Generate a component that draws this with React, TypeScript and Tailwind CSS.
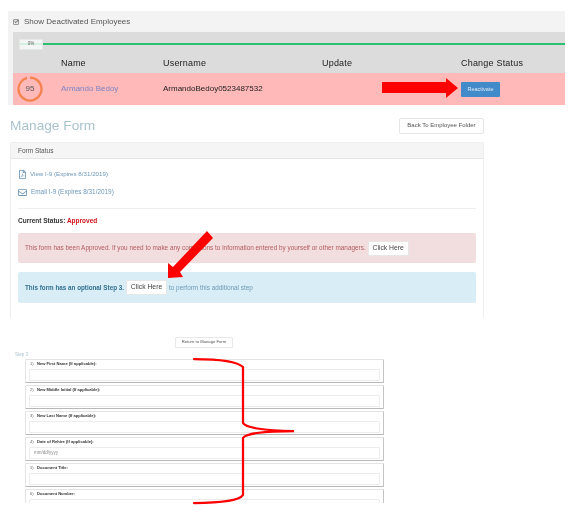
import { Check } from 'lucide-react';
import { FaRegEnvelope, FaRegFilePdf } from 'react-icons/fa';

const fields = [
  { label: 'New First Name (If applicable):' },
  { label: 'New Middle Initial (If applicable):' },
  { label: 'New Last Name (If applicable):' },
  { label: 'Date of Rehire (If applicable):', placeholder: 'mm/dd/yyyy' },
  { label: 'Document Title:' },
  { label: 'Document Number:' },
];

function ScoreRing() {
  return (
    <div className="relative ml-[4px] w-[26px] h-[26px] flex items-center justify-center text-[8px] text-[#555]">
      <svg className="absolute inset-0" width={26} height={26} viewBox="0 0 26 26">
        <circle cx={13} cy={13} r={11.5} fill="none" stroke="#f5834f" strokeWidth={2.25} strokeDasharray="68.6 3.6" transform="rotate(-90 13 13)" />
      </svg>
      <span>95</span>
    </div>
  );
}

function EmployeeTable() {
  return (
    <div className="ml-2 w-[557px] h-[94px] bg-[#f3f3f3] overflow-hidden">
      <div className="h-[21px] pl-[5px] flex items-center gap-[5px] text-[#555]">
        <span className="w-[6px] h-[6px] bg-[#e8e8e8] border border-[#999] rounded-[1px] flex items-center justify-center">
          <Check size={5} strokeWidth={4} className="text-[#333] shrink-0" />
        </span>
        <span className="text-[8px] leading-none">Show Deactivated Employees</span>
      </div>
      <div className="ml-[5px] bg-[#dcdcdc]">
        <div className="h-[41px]">
          <div className="h-[24px] flex items-center pl-[6px]">
            <div className="relative w-[24px] h-[11px] bg-[#f4f6f5] border border-[#e4e8e6] text-[4.5px] text-[#666] flex items-center justify-center">
              <span className="absolute inset-x-0 top-[3px] h-[2px] bg-[#d5efe0]" />
              <span className="relative">0%</span>
            </div>
            <div className="flex-1 h-[2px] bg-[#2fbf71]" />
          </div>
          <div className="flex text-[9px] text-[#222] leading-[14px] tracking-[0.2px]">
            <span className="ml-[48px] w-[102px]">Name</span>
            <span className="w-[159px]">Username</span>
            <span className="w-[139px]">Update</span>
            <span>Change Status</span>
          </div>
        </div>
        <div className="h-[32px] bg-[#ffb9b9] flex items-center">
          <ScoreRing />
          <a className="ml-[18px] w-[102px] text-[8px] text-[#7d84c4]">Armando Bedoy</a>
          <span className="w-[298px] text-[8px] text-[#222]">ArmandoBedoy0523487532</span>
          <button className="w-[39px] h-[15px] bg-[#428bca] rounded-[1px] text-[5.5px] text-[#dfe9f3]">Reactivate</button>
        </div>
      </div>
    </div>
  );
}

function FormStatus() {
  return (
    <div className="ml-[10px] w-[474px] h-[176px] border-l border-r border-t border-[#eeeeee] rounded-t-[2px] overflow-hidden">
      <div className="h-[16px] bg-[#f5f5f5] border-b border-[#e6e6e6] pl-[7px] flex items-center text-[6.5px] text-[#555]">Form Status</div>
      <div className="px-[7px]">
        <div className="h-[18px] mt-[6px] flex items-center gap-[3px] text-[6.2px] text-[#6d97b8]">
          <FaRegFilePdf size={9} />
          <span>View I-9 (Expires 8/31/2019)</span>
        </div>
        <div className="h-[18px] flex items-center gap-[4px] text-[6.4px] text-[#6d97b8]">
          <FaRegEnvelope size={9} />
          <span>Email I-9 (Expires 8/31/2019)</span>
        </div>
        <div className="mt-[7px] border-t border-[#eeeeee] h-[25px] flex items-center text-[6.5px] font-bold text-[#333]">
          <span>Current Status: <span className="text-[#d0111b]">Approved</span></span>
        </div>
        <div className="h-[30px] bg-[#f2dede] rounded-[2px] pl-[7px] flex items-center gap-[2px] text-[6.4px] text-[#b35a5f]">
          <span>This form has been Approved. If you need to make any corrections to information entered by yourself or other managers.</span>
          <button className="w-[41px] h-[15px] bg-white border border-[#e6e6e6] rounded-[1px] text-[6.8px] text-[#444]">Click Here</button>
        </div>
        <div className="mt-[9px] h-[31px] bg-[#d9edf7] rounded-[2px] pl-[7px] flex items-center text-[6.4px] text-[#6c9ab5]">
          <span className="font-bold text-[6.3px] text-[#31708f]">This form has an optional Step 3.</span>
          <button className="mx-[2px] w-[41px] h-[15px] bg-white border border-[#e6e6e6] rounded-[1px] text-[6.8px] text-[#444]">Click Here</button>
          <span>to perform this additional step</span>
        </div>
      </div>
    </div>
  );
}

function StepForm() {
  return (
    <div className="mt-[19px] h-[166px] overflow-hidden">
      <button className="block ml-[175px] w-[58px] h-[11px] bg-white border border-[#e8e8e8] rounded-[1px] text-[4.2px] text-[#555]">Return to Manage Form</button>
      <div className="ml-[15px] mt-[3px] h-[8px] leading-[8px] text-[4.5px] text-[#a9c3cc]">Step 3</div>
      <div className="ml-[25px] w-[359px] h-[144px] overflow-hidden">
        {fields.map((f, i) => (
          <div key={f.label} className="h-[24px] mb-[2px] border border-[#e4e4e4] border-r-[#c4c4c4] border-b-[#b8b8b8] rounded-[1px] px-[3px] bg-white">
            <div className="h-[8px] flex items-center text-[4.1px] text-[#333]">
              <span className="ml-[1px] w-[7px] text-[#666]">{i + 1})</span>
              <span className="font-bold">{f.label}</span>
            </div>
            <div className="mt-[1px] h-[12px] border border-[#ececec] rounded-[1px] pl-[4px] flex items-center text-[4.5px] text-[#888]">{f.placeholder}</div>
          </div>
        ))}
      </div>
    </div>
  );
}

function Annotations() {
  return (
    <svg className="absolute inset-0 pointer-events-none" width={581} height={521} viewBox="0 0 581 521">
      <path d="M382 82H446V78L458 88L446 98V93H382Z" fill="#ff0000" />
      <path d="M207 231L213 238L180 272L183 277L168 278L168 263L173 267Z" fill="#ff0000" />
      <path d="M194 359C222 359 238 362 243 367V423C245 427 262 431 294 431C262 431 245 434 243 438V495C240 500 222 503 194 503" fill="none" stroke="#ff0000" strokeWidth={2.25} strokeLinecap="round" />
    </svg>
  );
}

export default function App() {
  return (
    <div className="relative w-[581px] h-[521px] overflow-hidden bg-white font-['Liberation_Sans',Arial,sans-serif] blur-[0.3px]">
      <div className="pt-[11px]">
        <EmployeeTable />
      </div>
      <div className="h-[37px] pl-[10px] pr-[97px] flex items-center justify-between">
        <h1 className="text-[13.7px] text-[#a9c3cc] leading-none mt-[5px]">Manage Form</h1>
        <button className="w-[85px] h-[16px] mt-[4px] bg-white border border-[#e4e4e4] rounded-[2px] text-[6px] text-[#555]">Back To Employee Folder</button>
      </div>
      <FormStatus />
      <StepForm />
      <Annotations />
    </div>
  );
}
